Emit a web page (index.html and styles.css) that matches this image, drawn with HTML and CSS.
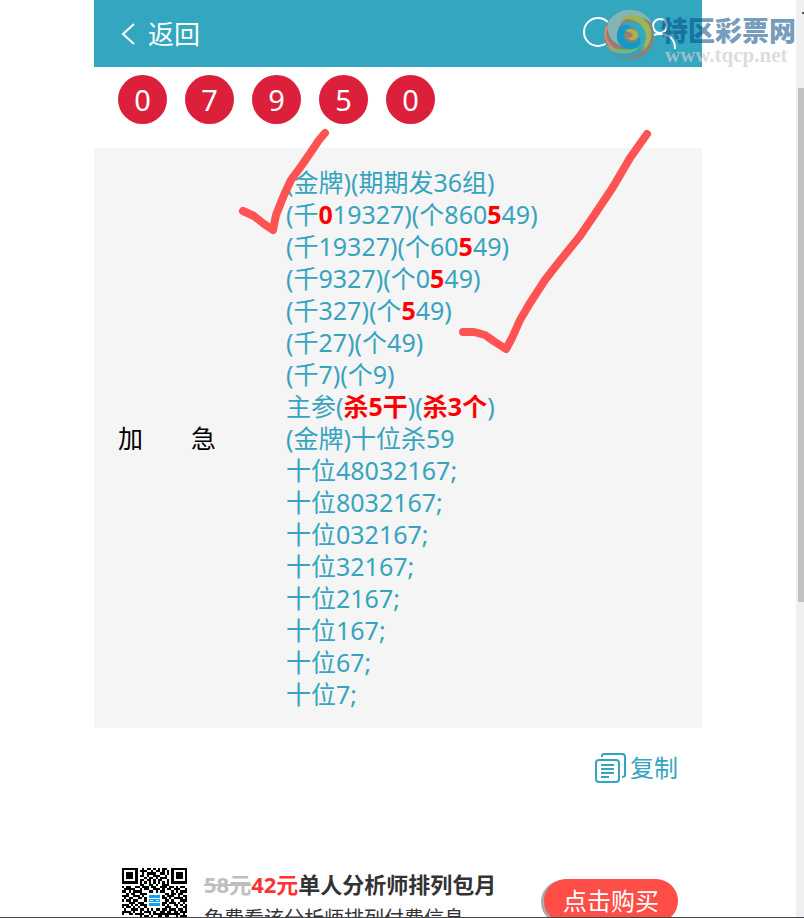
FILE: index.html
```html
<!DOCTYPE html>
<html lang="zh-CN">
<head>
  <meta charset="UTF-8">
  <meta name="viewport" content="width=device-width, initial-scale=1.0">
  <title>特区彩票网</title>
  <link rel="stylesheet" href="styles.css">
</head>
<body>
  <div class="viewport">
    <div class="page">
      <header class="topbar">
        <a class="back" href="#">
          <svg width="14" height="24" viewBox="0 0 14 24"><path d="M13 2L2 12l11 10"/></svg>
          <span>返回</span>
        </a>
        <nav class="tools">
          <a href="#" aria-label="搜索">
            <svg width="36" height="40" viewBox="0 0 36 40"><circle cx="16" cy="18" r="14"/><path d="M25 29l8 9"/></svg>
          </a>
          <a href="#" aria-label="我的">
            <svg width="34" height="40" viewBox="0 0 34 40"><circle cx="16" cy="12" r="7"/><path d="M1 35C1 25 7 20 16 20s15 5 15 15"/></svg>
          </a>
        </nav>
      </header>

      <div class="balls">
        <span class="ball">0</span>
        <span class="ball">7</span>
        <span class="ball">9</span>
        <span class="ball">5</span>
        <span class="ball">0</span>
      </div>

      <section class="plan">
        <div class="plan-name">加 急</div>
        <div class="plan-text">
          <p>(金牌)(期期发36组)</p>
          <p>(千<b>0</b>19327)(个860<b>5</b>49)</p>
          <p>(千19327)(个60<b>5</b>49)</p>
          <p>(千9327)(个0<b>5</b>49)</p>
          <p>(千327)(个<b>5</b>49)</p>
          <p>(千27)(个49)</p>
          <p>(千7)(个9)</p>
          <p>主参(<b>杀5干</b>)(<b>杀3个</b>)</p>
          <p>(金牌)十位杀59</p>
          <p>十位48032167;</p>
          <p>十位8032167;</p>
          <p>十位032167;</p>
          <p>十位32167;</p>
          <p>十位2167;</p>
          <p>十位167;</p>
          <p>十位67;</p>
          <p>十位7;</p>
        </div>
      </section>

      <div class="actions">
        <button class="copy" type="button">
          <svg width="32" height="32" viewBox="0 0 32 32">
            <rect x="1" y="8" width="23" height="22" rx="3"/>
            <path d="M7 5V4q0-2 2-2h18q3 0 3 3v18q0 2-3 2"/>
            <path d="M6 13h13M6 17h13M6 21h13M6 25h8"/>
          </svg>
          <span>复制</span>
        </button>
      </div>

      <section class="offer">
        <svg class="qr" viewBox="0 0 29 29" role="img" aria-label="二维码">
          <path id="qr-modules"/>
          <rect class="qr-gap" x="11" y="11" width="7" height="7"/>
          <rect class="qr-logo" x="12" y="12" width="5" height="5" rx="1"/>
          <path class="qr-logo-line" d="M12 13.600h5M12.500 14.500h1.500M15 14.500h1.500M12 15.500h5"/>
        </svg>
        <div class="offer-info">
          <h2><del>58元</del><em>42元</em>单人分析师排列包月</h2>
          <p>免费看该分析师排列付费信息</p>
        </div>
        <button class="buy" type="button">点击购买</button>
      </section>

      <svg class="marks" viewBox="0 0 608 400">
        <path d="M149 211L160 216L170 224L179 230L182 215L190 195L197 180L208 165L219 149L225 140L231 133"/>
        <path d="M369 332L380 332L391 335L401 342L412 349L418 338L426 320L436 303L451 280L465 262L486 236L501 214L519 187L536 158L553 134"/>
      </svg>
    </div>

    <div class="watermark">
      <svg width="52" height="54" viewBox="0 0 52 54">
        <circle cx="26" cy="27" r="25" fill="#917f76"/>
        <path d="M5 14C13 3 22 1 30 2c9 1 16 6 19 14C41 7 28 6 20 13c-7 7-7 18-1 25C7 34 3 24 5 14z" fill="#84b4b4"/>
        <path d="M17 12C28 2 44 8 48 22c3 14-9 26-24 25 14-4 20-11 18-21C40 14 29 9 17 12z" fill="#9db653"/>
        <path d="M17 18c10-9 25-3 26 9 1 12-10 19-21 16 11-2 15-9 13-16-2-8-10-11-18-9z" fill="#35aabc"/>
        <path d="M18 18c-8 8-4 22 8 23 9 1 13-6 11-13-2 6-10 9-14 4-5-5 0-12 7-10-3-5-8-7-12-4z" fill="#1498c8"/>
        <path d="M22 23c5-5 14-1 13 5-1 5-9 6-10 1 3 1 6-1 4-3-1-2-4-2-7-3z" fill="#b0ae4c"/>
        <path d="M3 37c10 5 20 6 32 3-7 10-25 9-32-3z" fill="#69bd78"/>
        <path d="M8 43c12 5 26 2 34-6-5 14-23 19-34 6z" fill="#3d9dbe"/>
        <path d="M4 18C0 27 3 35 12 42" fill="none" stroke="#d9897a" stroke-width="2"/>
      </svg>
      <div class="watermark-text">
        <strong>特区彩票网</strong>
        <span>www.tqcp.net</span>
      </div>
    </div>

    <div class="scrollbar"><span class="scroll-up"></span><span class="thumb"></span></div>
  </div>

  <script>
    const rows = [
      "11111110010110101011001111111",
      "10000010111001011010101000001",
      "10111010010111100110101011101",
      "10111010110100111001001011101",
      "10111010001011010111001011101",
      "10000010110110101100101000001",
      "11111110101010101010101111111",
      "00000000110011010011100000000",
      "10110011011101100111011010110",
      "01111100101100111010110111001",
      "11010111100011010110001010111",
      "00101100111010001101101101100",
      "11100111010111010110111001011",
      "01011001101100100111010111101",
      "10110110001101011001101000111",
      "00011101110011001011011101010",
      "11101010111000110110100110101",
      "10110101001110110101110010011",
      "01001110110101011011011101101",
      "11110100101110100110110110111",
      "10011011110010111111111111010",
      "00000000101101001101100010111",
      "11111110110011010110101011100",
      "10000010010111011001100010111",
      "10111010111001101101111111001",
      "10111010100110110011001101110",
      "10111010011101001110110010101",
      "10000010110011100101101111010",
      "11111110101101011011010100111"
    ];

    // Each dark module becomes a unit square in the path
    let d = "";
    rows.forEach((row, y) => {
      [...row].forEach((cell, x) => {
        if (cell === "1") d += `M${x} ${y}h1v1h-1z`;
      });
    });
    document.getElementById("qr-modules").setAttribute("d", d);
  </script>
</body>
</html>
```

FILE: styles.css
```css
* {
  box-sizing: border-box;
}

body {
  margin: 0;
  background: #fff;
  font-family: "Noto Sans", "Noto Sans CJK SC", sans-serif;
  font-size: 25px;
  line-height: 32px;
  color: #000;
}

p, h2 {
  margin: 0;
}

a {
  text-decoration: none;
}

button {
  border: none;
  padding: 0;
  font: inherit;
  cursor: pointer;
}

svg {
  display: block;
  flex: none;
}

.viewport {
  position: relative;
  height: 100vh;
  overflow: hidden;
  padding-right: 8px;
  border-bottom: 1px solid #45454b;
}

.page {
  position: relative;
  max-width: 608px;
  margin: 0 auto;
}

.topbar {
  display: flex;
  align-items: center;
  justify-content: space-between;
  height: 67px;
  padding: 0 24px;
  background: #33a6c0;
}

.back {
  display: flex;
  align-items: center;
  gap: 13px;
  padding-left: 3px;
  color: #fff;
  font-size: 26px;
}

.topbar svg {
  fill: none;
  stroke: #fff;
  stroke-width: 2;
}

.tools {
  display: flex;
  gap: 26px;
}

.balls {
  display: flex;
  gap: 18px;
  padding: 8px 24px 24px;
}

.ball {
  width: 49px;
  height: 49px;
  border-radius: 50%;
  background: #dc203c;
  color: #fff;
  font-size: 29px;
  line-height: 49px;
  text-align: center;
}

.plan {
  display: grid;
  grid-template-columns: 98px 1fr;
  column-gap: 70px;
  align-items: center;
  padding: 18px 24px;
  background: #f5f5f5;
}

.plan-name {
  text-align-last: justify;
}

.plan-text {
  color: #37a4bf;
}

.plan-text b {
  color: #f00;
}

.actions {
  display: flex;
  justify-content: flex-end;
  padding: 24px;
}

.copy {
  display: flex;
  align-items: center;
  gap: 3px;
  background: none;
  color: #37a4bf;
  font-size: 24px;
}

.copy svg {
  fill: none;
  stroke: #37a4bf;
  stroke-width: 2;
}

.offer {
  display: flex;
  align-items: flex-start;
  padding: 60px 24px 24px 28px;
}

.qr {
  width: 65px;
  height: 65px;
  shape-rendering: crispEdges;
}

.qr-gap {
  fill: #fff;
}

.qr-logo {
  fill: #159fe6;
}

.qr-logo-line {
  stroke: #fff;
  stroke-width: 0.4;
}

.offer-info {
  flex: 1;
  margin-left: 17px;
  color: #333;
  font-size: 20px;
  white-space: nowrap;
}

.offer-info h2 {
  margin-bottom: 3px;
  font-size: 22px;
}

.offer del {
  color: #bfbfbf;
}

.offer em {
  color: #f33;
  font-style: normal;
}

.buy {
  width: 134px;
  height: 44px;
  margin-top: 11px;
  border-radius: 22px;
  background: #ff4d47;
  box-shadow: -3px 1px 0 #aaa;
  color: #fff;
  font-size: 24px;
}

.marks {
  position: absolute;
  top: 0;
  left: 0;
  width: 100%;
  fill: none;
  stroke: #ff5252;
  stroke-width: 8;
  stroke-linecap: round;
  stroke-linejoin: round;
  pointer-events: none;
}

.watermark {
  position: absolute;
  top: 8px;
  right: 8px;
  display: flex;
  gap: 6px;
}

.watermark-text {
  display: flex;
  flex-direction: column;
  padding-top: 9px;
}

.watermark strong {
  color: rgba(0, 72, 132, 0.55);
  font-size: 27px;
  font-weight: 900;
  line-height: 28px;
}

.watermark span {
  color: rgba(205, 205, 205, 0.7);
  font-family: "Liberation Serif", serif;
  font-size: 21px;
  font-weight: bold;
  line-height: 20px;
  padding-left: 4px;
}

.scrollbar {
  position: absolute;
  top: 0;
  right: 0;
  bottom: 0;
  width: 8px;
  padding-left: 2px;
  background: #f0f0f0;
}

.scroll-up {
  display: block;
  height: 14px;
  margin-bottom: 74px;
  background: linear-gradient(#505050, #505050) right bottom / 2px 2px no-repeat;
}

.thumb {
  display: block;
  height: 56%;
  background: #c1c1c1;
}
```
